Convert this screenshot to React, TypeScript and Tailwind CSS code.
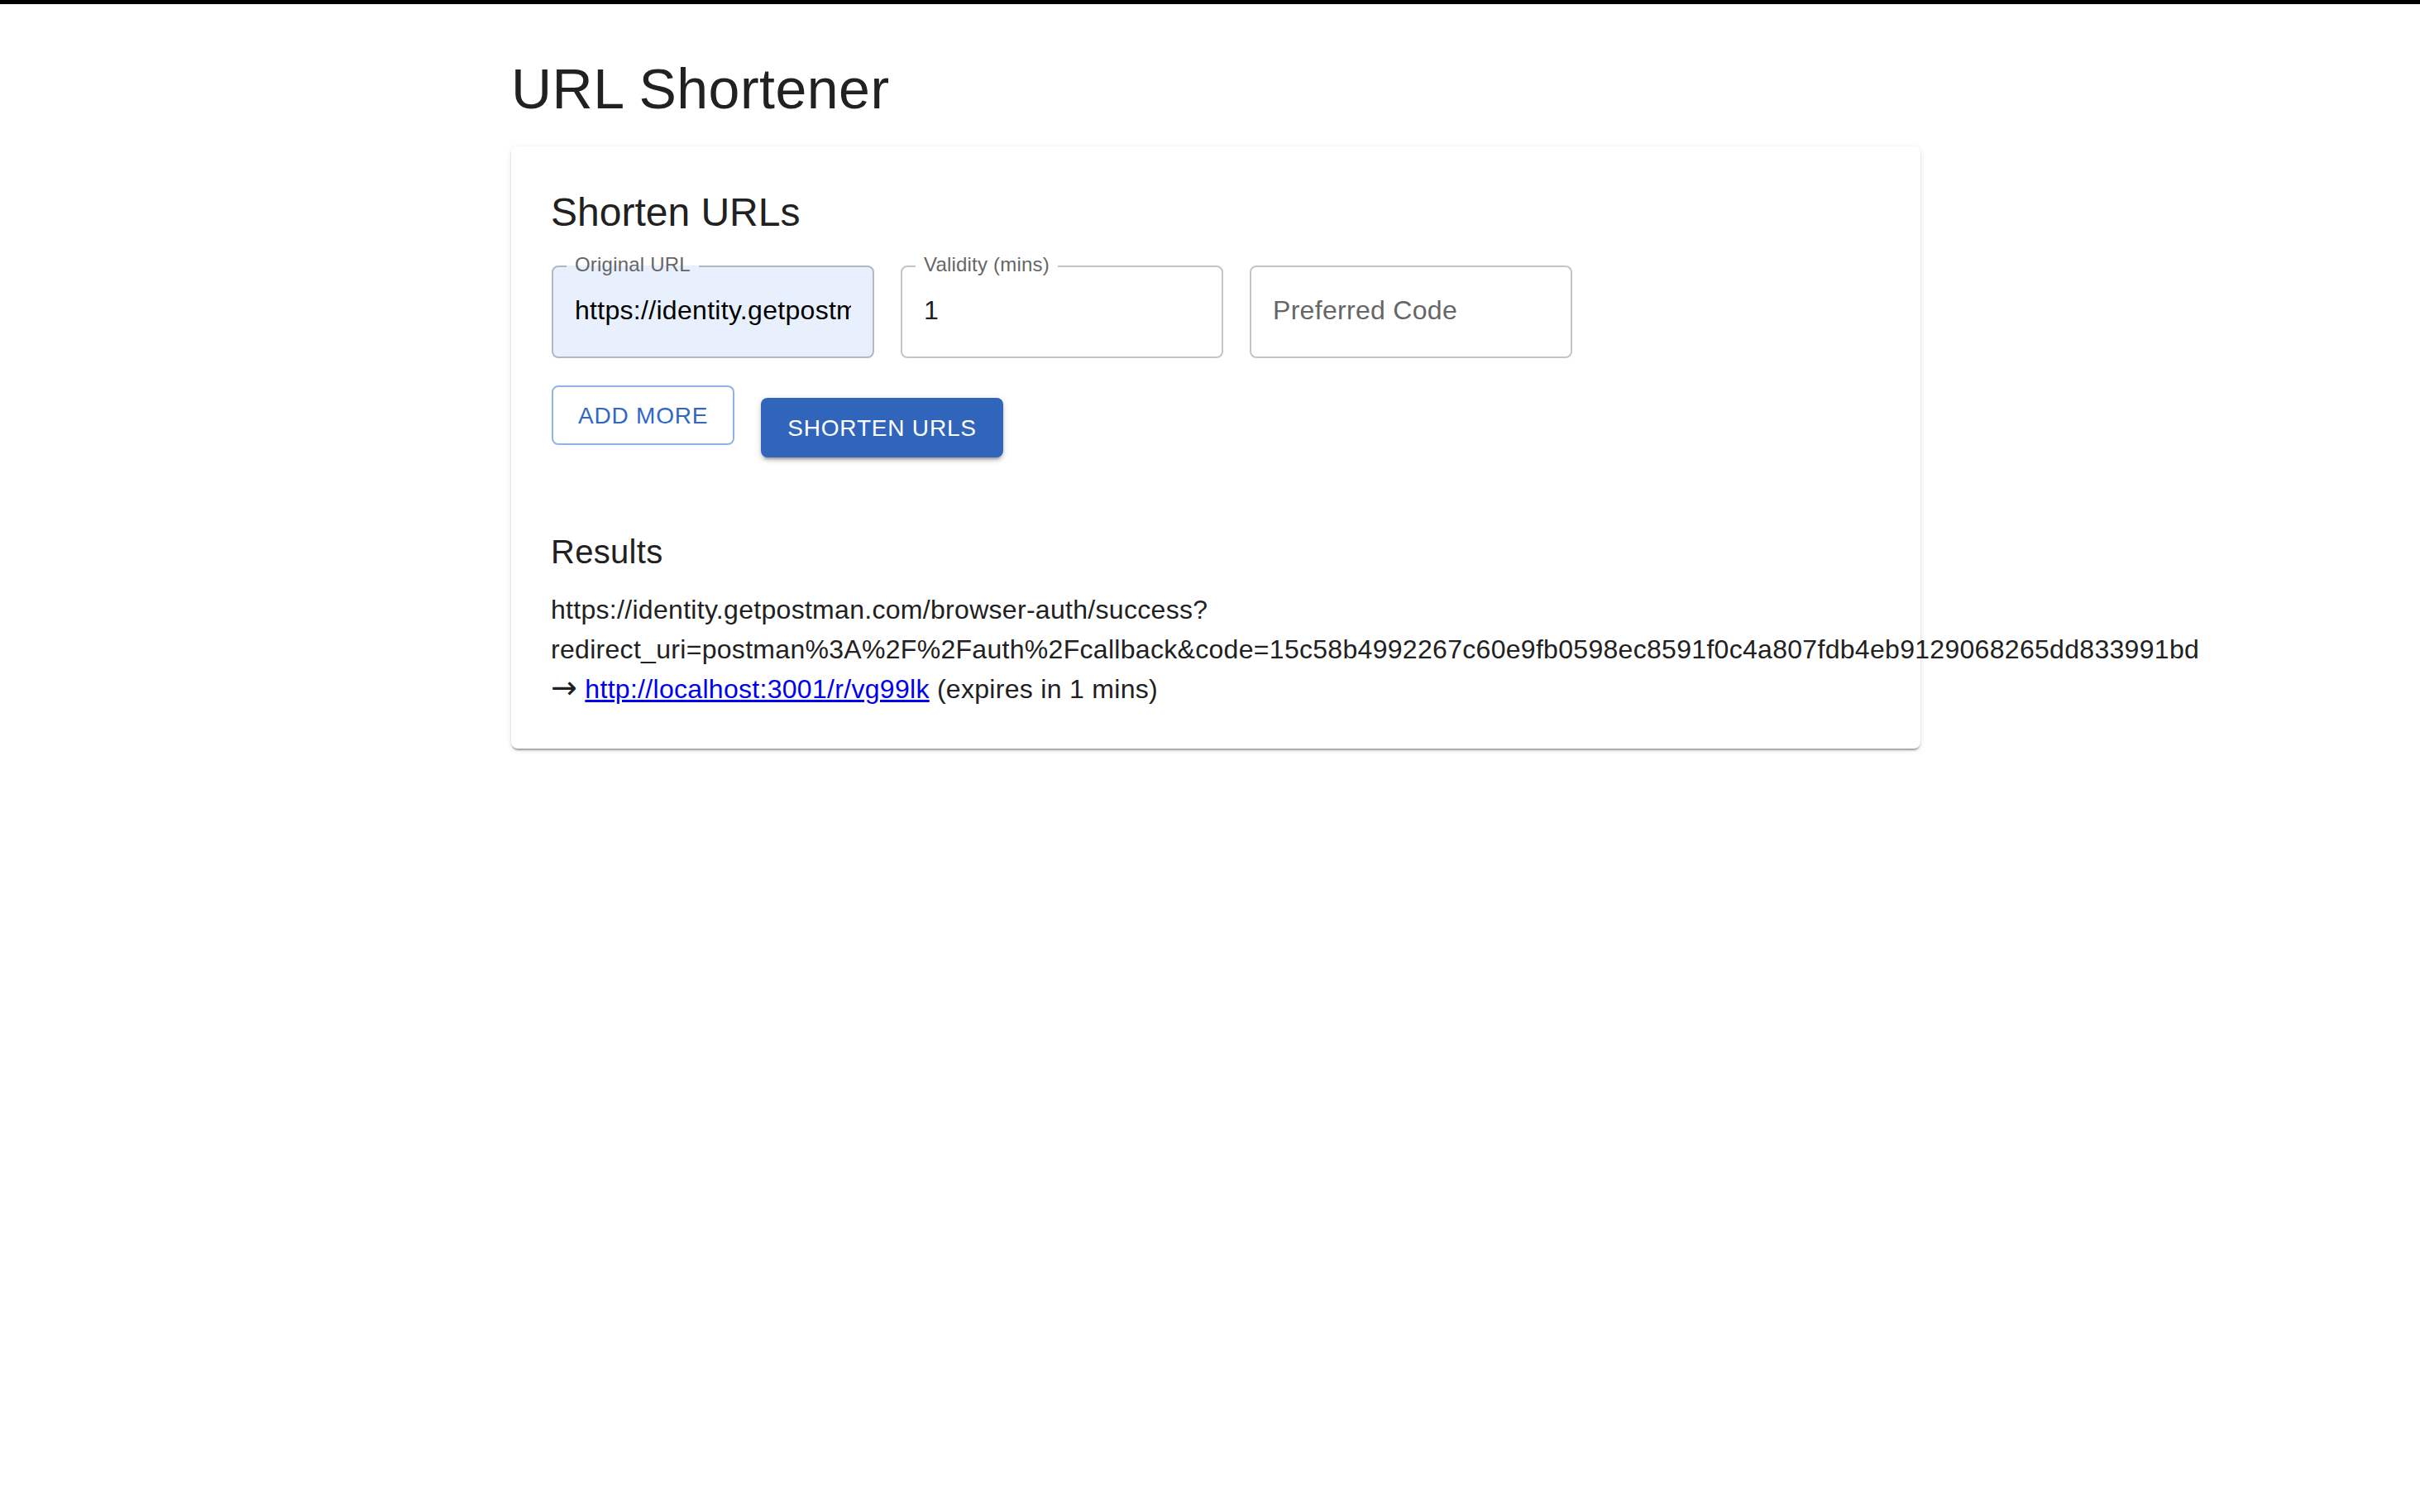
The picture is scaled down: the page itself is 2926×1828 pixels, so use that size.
import { useState } from "react"

type FieldProps = {
  label?: string
  value?: string
  placeholder?: string
  autofilled?: boolean
}

const longUrl =
  "https://identity.getpostman.com/browser-auth/success?redirect_uri=postman%3A%2F%2Fauth%2Fcallback&code=15c58b4992267c60e9fb0598ec8591f0c4a807fdb4eb9129068265dd833991bd"

const OutlinedField = ({ label, value, placeholder, autofilled }: FieldProps) => {
  const [text, setText] = useState(value ?? "")

  return (
    <div className="relative h-[112px] w-[390px] rounded-[8px]">
      <input
        value={text}
        onChange={(e) => setText(e.target.value)}
        placeholder={placeholder}
        className={`h-full w-full rounded-[8px] px-[28px] pb-[3px] text-[32px] tracking-[0.3px] outline-none placeholder:text-[#666666] ${
          autofilled ? "bg-[#e8f0fe] text-black" : "bg-white text-[#212121]"
        }`}
      />
      {label ? (
        <>
          <fieldset className="pointer-events-none absolute inset-x-0 bottom-0 top-[-10px] m-0 rounded-[8px] border-2 border-[rgba(0,0,0,0.23)] px-[16px] py-0">
            <legend className="invisible h-[22px] p-0 text-[24px] leading-[22px] tracking-[0.2px]">
              <span className="px-[10px]">{label}</span>
            </legend>
          </fieldset>
          <label className="pointer-events-none absolute left-[28px] top-[-13px] text-[24px] leading-[24px] tracking-[0.2px] text-[#666666]">
            {label}
          </label>
        </>
      ) : (
        <div className="pointer-events-none absolute inset-0 rounded-[8px] border-2 border-[rgba(0,0,0,0.23)]" />
      )}
    </div>
  )
}

const App = () => {
  return (
    <div className="min-h-screen bg-white font-['Liberation_Sans',Arial,sans-serif] text-[#212121]">
      <div className="h-[5px] bg-black" />
      <div className="ml-[618px] w-[1704px] pt-[60px]">
        <h1 className="mb-[28px] text-[68px] font-normal leading-[84px] tracking-[0.5px]">URL Shortener</h1>

        <div className="rounded-[8px] bg-white p-[48px] shadow-[0_4px_2px_-2px_rgba(0,0,0,0.2),0_2px_2px_0_rgba(0,0,0,0.14),0_2px_6px_0_rgba(0,0,0,0.12)]">
          <h2 className="text-[48px] font-normal leading-[64px]">Shorten URLs</h2>

          <div className="mt-[32px] flex gap-[32px] pl-[1px]">
            <OutlinedField label="Original URL" value={longUrl} autofilled />
            <OutlinedField label="Validity (mins)" value="1" />
            <OutlinedField placeholder="Preferred Code" />
          </div>

          <div className="mt-[33px] flex items-start gap-[32px] pl-[1px]">
            <button className="h-[72px] rounded-[8px] border-2 border-[#90b4e6] bg-white px-[30px] text-[28px] uppercase leading-[49px] tracking-[0.8px] text-[#3068c2]">
              Add more
            </button>
            <button className="mt-[15px] h-[72px] rounded-[8px] bg-[#3165bc] px-[32px] text-[28px] uppercase leading-[49px] tracking-[0.8px] text-white shadow-[0_6px_2px_-4px_rgba(0,0,0,0.2),0_4px_4px_0_rgba(0,0,0,0.14),0_2px_10px_0_rgba(0,0,0,0.12)]">
              Shorten URLs
            </button>
          </div>

          <div className="mt-[82px]">
            <h3 className="mb-[14px] text-[40px] font-normal leading-[64px] tracking-[0.3px]">Results</h3>
            <p className="text-[32px] leading-[48px] tracking-[0.3px]">
              {longUrl}{" "}
              <span className="font-['DejaVu_Sans',sans-serif] text-[38px] leading-[0]">→</span>{" "}
              <a href="#" className="text-[#0000ee] underline">
                http://localhost:3001/r/vg99lk
              </a>{" "}
              (expires in 1 mins)
            </p>
          </div>
        </div>
      </div>
    </div>
  )
}

export default App
